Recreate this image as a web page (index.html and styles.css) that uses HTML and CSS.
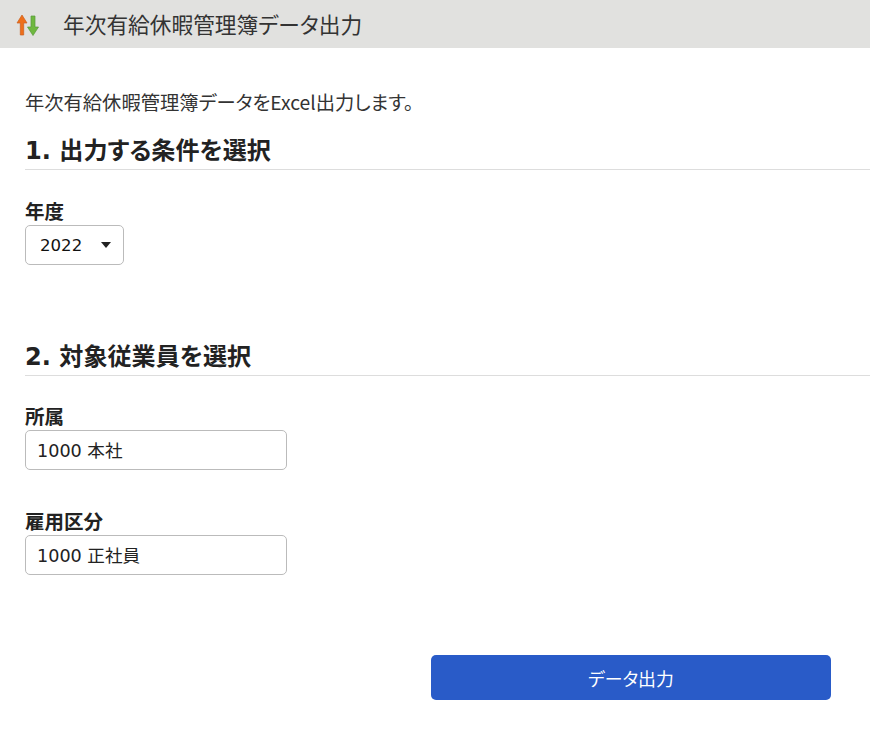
FILE: index.html
```html
<!DOCTYPE html>
<html lang="ja">

<head>
  <meta charset="UTF-8">
  <title>年次有給休暇管理簿データ出力</title>
  <link rel="stylesheet" href="styles.css">
</head>

<body>
  <!-- Header -->
  <header class="page-header">
    <svg class="header-icon" width="24" height="24" viewBox="0 0 24 24">
      <path d="M4.3 23V11H1L6 3 11 11H7.7V23Z" fill="#ee6f1a" stroke="#c8601f" stroke-width="0.7" stroke-linejoin="round"/>
      <path d="M15 4V15H11.5L17 23.5 22.5 15H19V4Z" fill="#6fb83f" stroke="#58993a" stroke-width="0.7" stroke-linejoin="round"/>
    </svg>
    <h1 class="page-title">年次有給休暇管理簿データ出力</h1>
  </header>

  <!-- Main Content -->
  <main class="main-content">
    <p class="lead">年次有給休暇管理簿データをExcel出力します。</p>

    <section class="section-condition">
      <h2 class="section-title">1. 出力する条件を選択</h2>
      <div class="field">
        <label class="field-label">年度</label>
        <div class="select-box">
          <span>2022</span>
          <span class="caret"></span>
        </div>
      </div>
    </section>

    <section class="section-target">
      <h2 class="section-title">2. 対象従業員を選択</h2>
      <div class="field">
        <label class="field-label">所属</label>
        <div class="text-box">1000 本社</div>
      </div>
      <div class="field">
        <label class="field-label">雇用区分</label>
        <div class="text-box">1000 正社員</div>
      </div>
    </section>

    <div class="actions">
      <button class="export-button">データ出力</button>
    </div>
  </main>
</body>

</html>
```

FILE: styles.css
```css
* {
  margin: 0;
  padding: 0;
  box-sizing: border-box;
}

html, body {
  height: 100%;
  overflow: hidden;
}

body {
  background-color: white;
  color: #222;
  font-family: "DejaVu Sans", "Noto Sans CJK JP", sans-serif;
  font-feature-settings: "palt";
}

.page-header {
  display: flex;
  align-items: center;
  height: 48px;
  padding-left: 16px;
  background-color: #e1e1df;
}

.header-icon {
  flex-shrink: 0;
  margin-right: 23px;
}

.page-title {
  font-size: 21.7px;
  font-weight: 400;
  line-height: 1;
  color: #333;
  padding-top: 3px;
}

.main-content {
  padding: 42px 0 0 25px;
}

.lead {
  font-family: "Noto Sans CJK JP", sans-serif;
  font-size: 19.3px;
  line-height: 24px;
  color: #333;
}

.section-title {
  font-size: 24.1px;
  font-weight: 700;
  line-height: 32px;
  border-bottom: 1px solid #ddd;
  padding-bottom: 2px;
}

.section-condition {
  margin-top: 21px;
}

.section-target {
  margin-top: 76px;
}

.field {
  margin-top: 30px;
}

.section-condition .field {
  margin-top: 31px;
}

.field + .field {
  margin-top: 41px;
}

.field-label {
  display: block;
  font-size: 19.5px;
  font-weight: 700;
  line-height: 24px;
}

.select-box {
  display: flex;
  align-items: center;
  justify-content: space-between;
  width: 99px;
  height: 40px;
  padding: 0 12px 0 14px;
  border: 1px solid #bbb;
  border-radius: 5px;
  font-size: 16.6px;
  color: #111;
}

.caret {
  width: 0;
  height: 0;
  border-left: 5.5px solid transparent;
  border-right: 5.5px solid transparent;
  border-top: 6px solid #222;
}

.text-box {
  display: flex;
  align-items: center;
  width: 262px;
  height: 40px;
  padding: 0 0 2px 11px;
  border: 1px solid #bbb;
  border-radius: 5px;
  font-size: 17.6px;
  color: #222;
}

.actions {
  margin-top: 80px;
  padding-left: 406px;
}

.export-button {
  width: 400px;
  height: 45px;
  border: none;
  border-radius: 5px;
  background: #295bc8;
  color: white;
  font-family: inherit;
  font-feature-settings: inherit;
  font-size: 17.9px;
  cursor: pointer;
}
```
